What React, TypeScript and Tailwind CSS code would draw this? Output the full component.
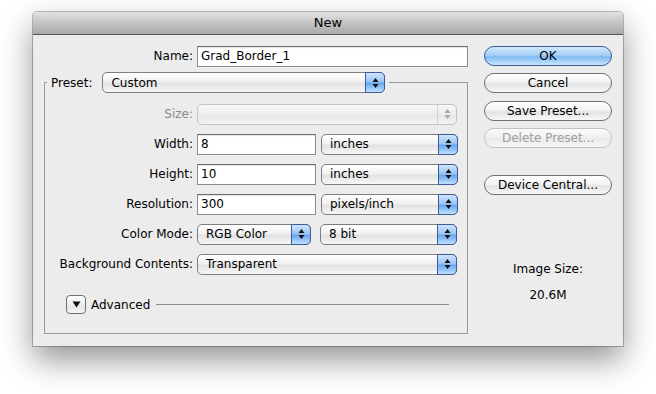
import React from 'react';

const font = { fontFamily: '"DejaVu Sans", "Lucida Grande", sans-serif' };

const Stepper = ({ dim }: { dim?: boolean }) => (
  <svg width="7" height="12" viewBox="0 0 7 12">
    <path d="M3.5 1 L6.5 5 L0.5 5 Z" fill={dim ? '#a8a8a8' : '#111'} />
    <path d="M3.5 11 L6.5 7 L0.5 7 Z" fill={dim ? '#a8a8a8' : '#111'} />
  </svg>
);

// aqua popup menu
const Popup = ({ value, className, disabled }: { value: string; className: string; disabled?: boolean }) => (
  <div
    className={`flex h-[21px] items-stretch rounded-[5px] border ${
      disabled
        ? 'border-[#c4c4c4] bg-[linear-gradient(to_bottom,#f8f8f8,#ececec_50%,#e6e6e6_51%,#f2f2f2)]'
        : 'border-[#7e7e7e] bg-[linear-gradient(to_bottom,#ffffff,#f1f1f1_45%,#e2e2e2_55%,#f7f7f7)]'
    } ${className}`}
  >
    <span className="flex flex-1 items-center truncate pl-[8px] text-[12px] leading-none text-black">{value}</span>
    {disabled ? (
      <span className="flex w-[19px] items-center justify-center border-l border-[#d4d4d4]">
        <Stepper dim />
      </span>
    ) : (
      <span className="-my-px -mr-px flex w-[20px] items-center justify-center rounded-r-[5px] border border-[#3c5a9c] bg-[linear-gradient(to_bottom,#cfe4fb,#9ac6f4_45%,#6aa8ef_55%,#bfe0fd)]">
        <Stepper />
      </span>
    )}
  </div>
);

const TextField = ({ value, className }: { value: string; className: string }) => (
  <div
    className={`flex h-[21px] items-center border border-[#8c8c8c] border-t-[#6e6e6e] bg-white pl-[3px] text-[12px] text-black shadow-[inset_0_1px_1px_rgba(0,0,0,0.12)] ${className}`}
  >
    {value}
  </div>
);

const Label = ({ children, dim }: { children: React.ReactNode; dim?: boolean }) => (
  <div className={`w-[152px] shrink-0 pr-[4px] text-right text-[12px] ${dim ? 'text-[#8a8a8a]' : 'text-black'}`}>
    {children}
  </div>
);

const Row = ({ children }: { children: React.ReactNode }) => (
  <div className="flex h-[22px] items-center">{children}</div>
);

const Button = ({ label, primary, disabled }: { label: string; primary?: boolean; disabled?: boolean }) => (
  <div
    className={`flex h-[20px] w-[128px] items-center justify-center rounded-full border text-[12px] ${
      primary
        ? 'border-[#3e5b99] bg-[linear-gradient(to_bottom,#d3e8fc,#a6d0f7_45%,#7fbaf2_55%,#c8e6fd)] text-black'
        : disabled
        ? 'border-[#c2c2c2] bg-[linear-gradient(to_bottom,#fbfbfb,#f0f0f0_50%,#e9e9e9_51%,#f6f6f6)] text-[#9e9e9e]'
        : 'border-[#6f6f6f] bg-[linear-gradient(to_bottom,#ffffff,#f3f3f3_45%,#e3e3e3_55%,#f8f8f8)] text-black'
    }`}
  >
    {label}
  </div>
);

export default function App() {
  return (
    <div className="h-[394px] w-[656px] overflow-hidden bg-white pl-[33px] pt-[12px]" style={font}>
      <div className="flex h-[334px] w-[590px] flex-col rounded-t-[4px] bg-[#ececec] shadow-[0_14px_32px_rgba(0,0,0,0.42),0_0_0_1px_rgba(0,0,0,0.25)]">
        {/* Title bar */}
        <div className="flex h-[23px] shrink-0 items-center justify-center rounded-t-[4px] border-b border-[#575757] bg-[linear-gradient(to_bottom,#e2e2e2,#c4c4c4_50%,#a9a9a9)] text-[13px] text-black">
          New
        </div>

        <div className="flex flex-1 pl-[11px] pr-[11px] pt-[10px]">
          {/* Left side */}
          <div className="flex w-[424px] flex-col">
            <div className="flex h-[22px] items-center">
              <div className="w-[153px] pr-[4px] text-right text-[12px] text-black">Name:</div>
              <TextField value="Grad_Border_1" className="w-[271px]" />
            </div>

            <fieldset className="mt-[5px] h-[262px] border border-[#9a9a9a]">
              <legend className="ml-[2px] flex items-center px-[4px]">
                <span className="pr-[10px] text-[12px] text-black">Preset:</span>
                <Popup value="Custom" className="w-[283px]" />
              </legend>

              <div className="flex flex-col gap-[8px] pt-[10px]">
                <Row>
                  <Label dim>Size:</Label>
                  <Popup value="" className="w-[260px]" disabled />
                </Row>
                <Row>
                  <Label>Width:</Label>
                  <TextField value="8" className="w-[119px]" />
                  <Popup value="inches" className="ml-[5px] w-[137px]" />
                </Row>
                <Row>
                  <Label>Height:</Label>
                  <TextField value="10" className="w-[119px]" />
                  <Popup value="inches" className="ml-[5px] w-[137px]" />
                </Row>
                <Row>
                  <Label>Resolution:</Label>
                  <TextField value="300" className="w-[119px]" />
                  <Popup value="pixels/inch" className="ml-[5px] w-[137px]" />
                </Row>
                <Row>
                  <Label>Color Mode:</Label>
                  <Popup value="RGB Color" className="w-[114px]" />
                  <Popup value="8 bit" className="ml-[9px] w-[137px]" />
                </Row>
                <Row>
                  <Label>Background Contents:</Label>
                  <Popup value="Transparent" className="w-[260px]" />
                </Row>
              </div>

              <div className="mt-[20px] flex items-center pl-[21px] pr-[18px]">
                <div className="flex h-[19px] w-[20px] items-center justify-center rounded-[4px] border border-[#707070] bg-[linear-gradient(to_bottom,#ffffff,#eeeeee_50%,#e2e2e2_51%,#f6f6f6)]">
                  <svg width="9" height="7" viewBox="0 0 9 7">
                    <path d="M0.5 0.5 L8.5 0.5 L4.5 6.5 Z" fill="#111" />
                  </svg>
                </div>
                <span className="ml-[5px] text-[12px] text-black">Advanced</span>
                <div className="ml-[6px] h-px flex-1 bg-[#8e8e8e]" />
              </div>
            </fieldset>
          </div>

          {/* Right side */}
          <div className="ml-[16px] flex flex-col items-center">
            <div className="mt-[1px] flex flex-col gap-[7px]">
              <Button label="OK" primary />
              <Button label="Cancel" />
            </div>
            <div className="mt-[8px] flex flex-col gap-[7px]">
              <Button label="Save Preset..." />
              <Button label="Delete Preset..." disabled />
            </div>
            <div className="mt-[27px]">
              <Button label="Device Central..." />
            </div>
            <div className="mt-[65px] text-[12px] text-black">Image Size:</div>
            <div className="mt-[8px] text-[12px] text-black">20.6M</div>
          </div>
        </div>
      </div>
    </div>
  );
}
